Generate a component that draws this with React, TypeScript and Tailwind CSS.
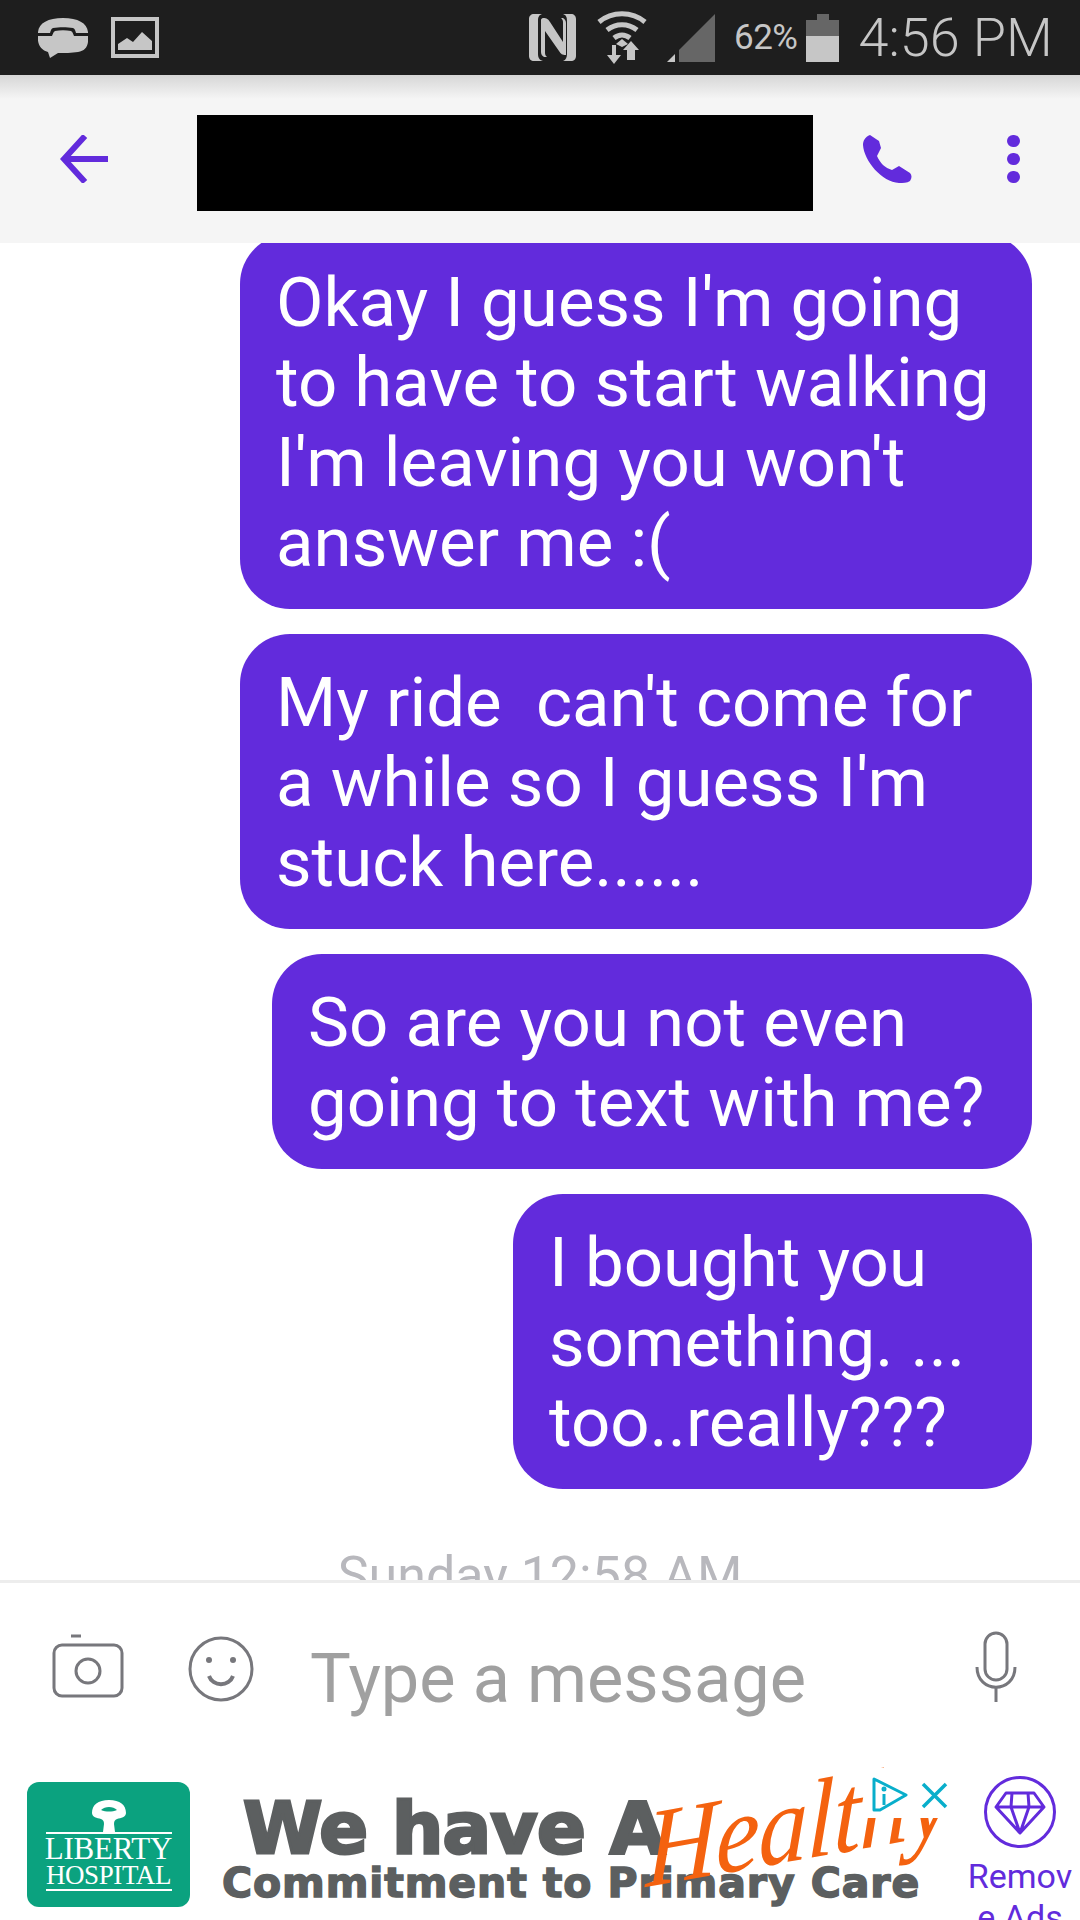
const messages = [
  { width: "w-[792px]", lines: ["Okay I guess I'm going", "to have to start walking", "I'm leaving you won't", "answer me :("] },
  { width: "w-[792px]", lines: ["My ride  can't come for", "a while so I guess I'm", "stuck here......"] },
  { width: "w-[760px]", lines: ["So are you not even", "going to text with me?"] },
  { width: "w-[519px]", lines: ["I bought you", "something. ...", "too..really???"] },
];

function StatusBar() {
  return (
    <div className="flex h-[75px] shrink-0 items-center bg-[#1e1e1e] text-[#c6c6c6]">
      {/* textnow */}
      <svg className="ml-[38px] h-[40px] w-[50px]" viewBox="0 0 50 40" fill="#c6c6c6">
        <path d="M0 14C1 5 10 0 25 0s24 5 25 14v1H38c-1-3-1-4-3-5-6-1-14-1-20 0-2 1-2 2-3 5H0z" />
        <path d="M0 18h14c1-2 1-4 3-5 5-1 11-1 16 0 2 1 2 3 3 5h14c1 9-2 15-10 16-6 1-14 1-20 1l-8 5-2-6C3 32-1 26 0 18z" />
      </svg>
      {/* picture */}
      <svg className="ml-[23px] h-[41px] w-[48px]" viewBox="0 0 48 41">
        <rect x="2" y="2" width="44" height="37" fill="none" stroke="#c6c6c6" strokeWidth="4" />
        <path d="M7 33V27l9-6 6 4 9-10 10 9v9z" fill="#c6c6c6" />
      </svg>
      {/* nfc */}
      <svg className="ml-[370px] h-[47px] w-[47px]" viewBox="0 0 47 47" fill="#c6c6c6">
        <path d="M5 0h8c-3 1-4 3-4 7v33c0 3 1 6 5 7H5c-3 0-5-2-5-5V5c0-3 2-5 5-5z" />
        <path d="M34 0h8c3 0 5 2 5 5v37c0 3-2 5-5 5h-8c3-1 4-4 4-7V7c0-4-1-6-4-7z" />
        <path d="M14 4c4 0 5 1 7 4l13 20V8c0-2-1-3-2-4-5 0-5 0-7 0h9c2 1 3 3 3 5v32c-4 0-5-1-7-4L16 17v22c0 2 1 3 2 4h-3c-2-1-3-3-3-5V6c0-1 1-2 2-2z" />
      </svg>
      {/* wifi with up/down arrows */}
      <svg className="ml-[21px] h-[53px] w-[50px]" viewBox="0 0 50 53" fill="none">
        <path d="M2 11c13-11 33-11 46 0" stroke="#c6c6c6" strokeWidth="5" />
        <path d="M10 19c9-7 21-7 30 0" stroke="#c6c6c6" strokeWidth="5" />
        <path d="M17 27c5-4 11-4 16 0" stroke="#c6c6c6" strokeWidth="5" />
        <path d="M19 33l6-5 6 5-6 3z" fill="#c6c6c6" />
        <path d="M15 34v10h-5l7 9 7-9h-5V34z" fill="#c6c6c6" />
        <path d="M30 49V39h-4l8-9 8 9h-4v10z" fill="#c6c6c6" />
      </svg>
      {/* signal */}
      <svg className="ml-[20px] h-[48px] w-[48px]" viewBox="0 0 48 48">
        <path d="M12 48V36L48 0v48z" fill="#666666" />
        <path d="M0 48l8-8v8z" fill="#c6c6c6" />
      </svg>
      <span className="ml-[19px] font-['Roboto',sans-serif] text-[35px] leading-none tracking-[-0.5px]">62%</span>
      {/* battery */}
      <div className="ml-[9px] flex h-[48px] w-[33px] flex-col items-center">
        <div className="h-[6px] w-[12px] bg-[#666666]" />
        <div className="h-[16px] w-full bg-[#666666]" />
        <div className="h-[26px] w-full bg-[#c6c6c6]" />
      </div>
      <span className="ml-[19px] whitespace-nowrap font-['Roboto',sans-serif] text-[54px] font-light leading-none">4:56 PM</span>
    </div>
  );
}

function Header() {
  return (
    <div className="relative z-10 flex h-[168px] shrink-0 items-center bg-[#f5f5f5]">
      <div className="absolute inset-x-0 top-0 h-[24px] bg-linear-to-b from-[#d6d6d6] to-[#f5f5f5]" />
      <svg className="ml-[60px] h-[48px] w-[48px]" viewBox="0 0 48 48" fill="none" stroke="#622bdc" strokeWidth="6">
        <path d="M25 1L4 24l21 23M4 24h44" />
      </svg>
      <div className="ml-[89px] mt-[8px] h-[96px] w-[616px] bg-black" />
      <svg className="ml-[50px] h-[48px] w-[50px]" viewBox="0 0 50 48" fill="#622bdc">
        <path d="M7 0l9 6 2 7-4 8c3 7 8 12 15 14l7-4 11 7c2 2 2 5 0 8-3 2-7 2-11 2C19 47 1 26 0 10 0 6 2 2 7 0z" />
      </svg>
      <div className="ml-[94px] flex h-[48px] flex-col justify-between">
        <div className="h-[12px] w-[13px] rounded-full bg-[#622bdc]" />
        <div className="h-[12px] w-[13px] rounded-full bg-[#622bdc]" />
        <div className="h-[12px] w-[13px] rounded-full bg-[#622bdc]" />
      </div>
    </div>
  );
}

function Composer() {
  return (
    <div className="flex h-[170px] shrink-0 items-start border-t-[3px] border-[#ededed] bg-white pt-[51px]">
      <svg className="ml-[52px] h-[64px] w-[72px]" viewBox="0 0 72 64" fill="none" stroke="#77777c" strokeWidth="3">
        <path d="M19 2h10" />
        <rect x="2" y="11" width="68" height="51" rx="8" />
        <circle cx="36" cy="37" r="12" />
      </svg>
      <svg className="ml-[64px] mt-[2px] h-[66px] w-[66px]" viewBox="0 0 66 66" fill="none" stroke="#77777c" strokeWidth="3">
        <circle cx="33" cy="33" r="31" />
        <circle cx="21" cy="24" r="3" fill="#77777c" stroke="none" />
        <circle cx="45" cy="24" r="3" fill="#77777c" stroke="none" />
        <path d="M21 40c4 11 20 11 24 0" strokeWidth="4" />
      </svg>
      <div className="ml-[56px] mt-[-1px] whitespace-nowrap font-['Roboto',sans-serif] text-[68.5px] leading-[92px] text-[#a0a0a0]">Type a message</div>
      <svg className="ml-auto mr-[63px] mt-[-3px] h-[71px] w-[42px]" viewBox="0 0 42 71" fill="none" stroke="#77777c" strokeWidth="3">
        <rect x="10" y="2" width="22" height="47" rx="11" />
        <path d="M2 36c0 27 38 27 38 0" />
        <path d="M21 56v15" />
      </svg>
    </div>
  );
}

function Ad() {
  return (
    <div className="relative flex h-[170px] shrink-0 overflow-hidden bg-white">
      <div className="ml-[27px] mt-[32px] flex h-[125px] w-[163px] shrink-0 flex-col items-center rounded-[12px] bg-[#0ba27f] text-white">
        <svg className="mt-[18px] h-[32px] w-[36px]" viewBox="0 0 36 32" fill="#ffffff">
          <path d="M18 0c11 0 17 5 17 13 0 4-5 5-9 6-2 1-3 2-3 5l1 8H12l1-8c0-3-1-4-3-5-4-1-9-2-9-6C1 5 7 0 18 0z" />
          <path d="M10 10c4-4 12-4 16 0-5 2-11 2-16 0z" fill="#0ba27f" />
        </svg>
        <div className="h-[2px] w-[126px] bg-white" />
        <div className="mt-[1px] font-['Liberation_Serif',serif] text-[31px] font-medium leading-[28px] tracking-[-0.2px]">LIBERTY</div>
        <div className="font-['Liberation_Serif',serif] text-[27px] font-medium leading-[24px] tracking-[-0.4px]">HOSPITAL</div>
        <div className="mt-[2px] h-[2px] w-[126px] bg-white" />
      </div>
      <div className="ml-[32px] mt-[44px] flex flex-col font-['DejaVu_Sans',sans-serif] font-bold text-[#5c5f60]">
        <div className="ml-[21px] whitespace-nowrap text-[72px] leading-[68px] tracking-[-0.6px] [-webkit-text-stroke:3px_#5c5f60]">We have A</div>
        <div className="mt-[-1px] whitespace-nowrap text-[41px] leading-[44px] tracking-[0.9px] [-webkit-text-stroke:1.5px_#5c5f60]">Commitment to Primary Care</div>
      </div>
      <div className="absolute left-[646px] top-[50px] origin-left -rotate-[10deg] -skew-x-12 scale-y-110 font-['Liberation_Serif',serif] text-[100px] italic leading-none tracking-[-1px] text-[#f4620f]">Healthy</div>
      <div className="absolute left-[867px] top-[18px] h-[50px] w-[90px] bg-white" />
      <svg className="absolute left-[872px] top-[27px] h-[36px] w-[36px]" viewBox="0 0 36 36" fill="none" stroke="#08aecb" strokeWidth="3">
        <path d="M2 2l32 16L8 33 2 33z" strokeLinejoin="round" />
        <path d="M12 17v11" />
        <circle cx="12" cy="12" r="1" fill="#08aecb" />
      </svg>
      <svg className="absolute left-[921px] top-[32px] h-[27px] w-[27px]" viewBox="0 0 27 27" fill="none" stroke="#08aecb" strokeWidth="3.5">
        <path d="M2 2l23 23M25 2L2 25" />
      </svg>
      <div className="absolute left-[962px] top-[26px] flex w-[116px] flex-col items-center text-[#622bdc]">
        <svg className="h-[72px] w-[72px]" viewBox="0 0 72 72" fill="none" stroke="#622bdc">
          <circle cx="36" cy="36" r="34.5" strokeWidth="3" />
          <path d="M22 17h28l10 14-24 26-24-26zM12 31h48M27 31l9 26 9-26M28 17l-1 14M44 17l1 14" strokeWidth="3" strokeLinejoin="round" />
        </svg>
        <div className="mt-[8px] font-['Roboto',sans-serif] text-[34px] leading-[41px]">Remov</div>
        <div className="font-['Roboto',sans-serif] text-[34px] leading-[41px]">e Ads</div>
      </div>
    </div>
  );
}

export default function App() {
  return (
    <div className="flex h-[1920px] w-[1080px] flex-col overflow-hidden bg-white">
      <StatusBar />
      <Header />
      <div className="flex min-h-0 flex-1 flex-col overflow-hidden">
        <div className="mt-[-9px] flex flex-col items-end gap-[25px] pr-[48px]">
          {messages.map((m, i) => (
            <div key={i} className={`${m.width} rounded-[50px] bg-[#622bdc] pb-[26px] pl-[36px] pt-[29px] font-['Roboto',sans-serif] text-[69px] leading-[80px] text-white`}>
              {m.lines.map((l) => (
                <div key={l} className="whitespace-pre">{l}</div>
              ))}
            </div>
          ))}
        </div>
        <div className="mt-[60px] text-center font-['Roboto',sans-serif] text-[52px] leading-[54px] text-[#b8b8bd]">Sunday 12:58 AM</div>
      </div>
      <Composer />
      <Ad />
    </div>
  );
}
